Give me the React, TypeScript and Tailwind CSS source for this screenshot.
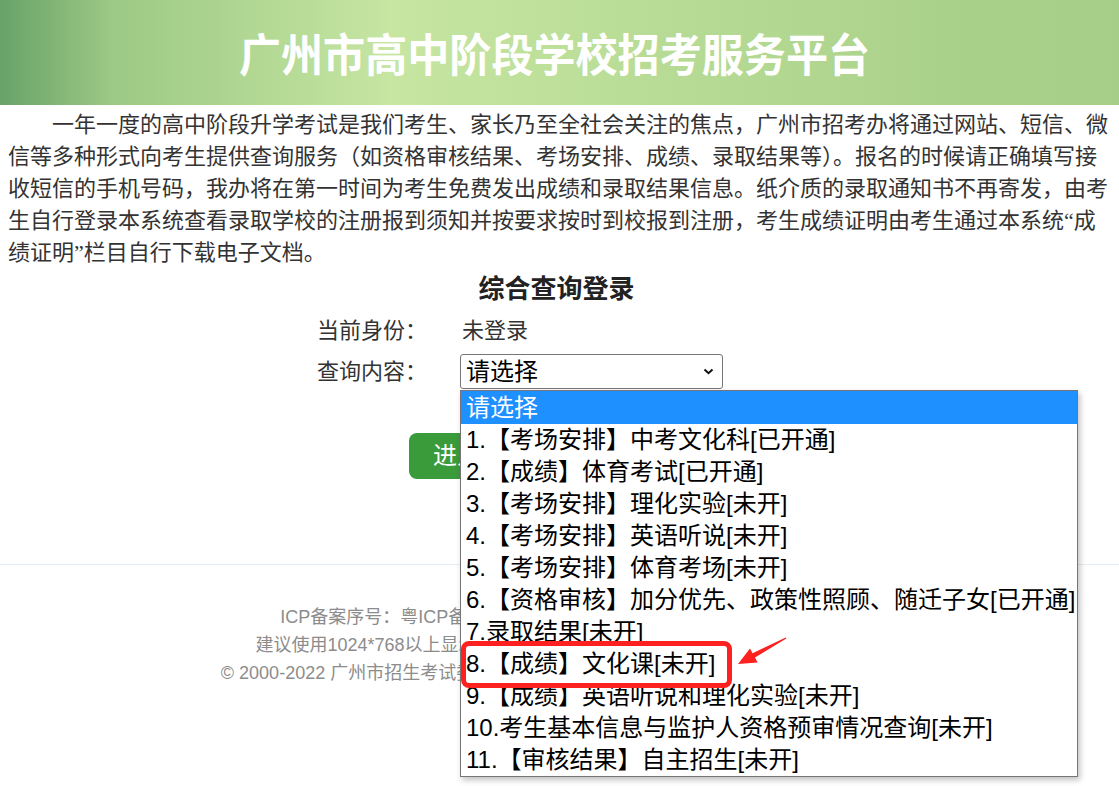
import React from 'react';

const serif = "font-['Liberation_Serif','Noto_Sans_CJK_SC',serif]";
const sans = "font-['Liberation_Sans','Noto_Sans_CJK_SC',sans-serif]";

const options = [
  '1.【考场安排】中考文化科[已开通]',
  '2.【成绩】体育考试[已开通]',
  '3.【考场安排】理化实验[未开]',
  '4.【考场安排】英语听说[未开]',
  '5.【考场安排】体育考场[未开]',
  '6.【资格审核】加分优先、政策性照顾、随迁子女[已开通]',
  '7.录取结果[未开]',
  '8.【成绩】文化课[未开]',
  '9.【成绩】英语听说和理化实验[未开]',
  '10.考生基本信息与监护人资格预审情况查询[未开]',
  '11.【审核结果】自主招生[未开]',
];

function Dropdown() {
  return (
    <div className="absolute left-0 top-[36px] w-[618px] border border-[#767676] bg-white shadow-[2px_3px_6px_rgba(0,0,0,0.25)] z-10">
      <div className={`h-[33px] leading-[33px] pl-[5px] bg-[#1e90ff] text-white text-[24px] ${sans}`}>请选择</div>
      {options.map((o) => (
        <div key={o} className={`h-[32px] leading-[32px] pl-[5px] text-black text-[24px] whitespace-nowrap ${sans}`}>
          {o}
        </div>
      ))}

      {/* annotation */}
      <div className="absolute left-[0px] top-[250px] w-[271px] h-[47px] border-[5px] border-[#ff2020] rounded-[8px]" />
      <svg className="absolute left-[273px] top-[240px]" width="56" height="40" viewBox="0 0 56 40">
        <polygon
          points="4,33 23.6,31.4 21,26.6 52.3,7.5 51.7,6.5 18.6,22.2 16,17.4"
          fill="#ff2020"
        />
      </svg>
    </div>
  );
}

export default function App() {
  return (
    <div className="w-[1119px] min-h-[786px] bg-white overflow-hidden">
      <header className="h-[105px] flex items-center justify-center pr-[10px] bg-[linear-gradient(90deg,#68a268_0%,#9cc985_10%,#c6e6a2_35%,#b8dc96_58%,#aad18a_85%,#a6ce88_100%)]">
        <h1 className="text-white text-[45px] font-bold scale-x-[0.935] font-['Noto_Sans_CJK_SC',sans-serif]">
          广州市高中阶段学校招考服务平台
        </h1>
      </header>

      <p className={`mt-[4px] px-[8px] text-[22px] leading-[32px] text-[#333] indent-[44px] ${serif}`}>
        一年一度的高中阶段升学考试是我们考生、家长乃至全社会关注的焦点，广州市招考办将通过网站、短信、微信等多种形式向考生提供查询服务（如资格审核结果、考场安排、成绩、录取结果等）。报名的时候请正确填写接收短信的手机号码，我办将在第一时间为考生免费发出成绩和录取结果信息。纸介质的录取通知书不再寄发，由考生自行登录本系统查看录取学校的注册报到须知并按要求按时到校报到注册，考生成绩证明由考生通过本系统“成绩证明”栏目自行下载电子文档。
      </p>

      <h2 className={`mt-[5px] text-center pr-[6px] text-[26px] leading-[32px] font-bold text-[#222] ${serif}`}>
        综合查询登录
      </h2>

      <div className={`w-[485px] mx-auto mt-[6px] text-[22px] text-[#333] ${serif}`}>
        <div className="flex items-center h-[36px]">
          <span className="w-[144px]">当前身份：</span>
          <span className="pl-[1px]">未登录</span>
        </div>
        <div className="flex items-center h-[35px] mt-[6px]">
          <span className="w-[143px]">查询内容：</span>
          <div className="relative">
            <div className={`w-[263px] h-[35px] border border-[#767676] rounded-[3px] bg-white flex items-center justify-between pl-[5px] pr-[8px] text-black text-[24px] ${sans}`}>
              <span>请选择</span>
              <svg width="11" height="7" viewBox="0 0 11 7">
                <path d="M1.5 1.5 L5.5 5.2 L9.5 1.5" fill="none" stroke="#111" strokeWidth="2" />
              </svg>
            </div>
            <Dropdown />
          </div>
        </div>
        <button className={`mt-[44px] ml-[92px] h-[46px] px-[24px] rounded-[8px] bg-[#3a9b3a] text-white text-[24px] ${sans}`}>
          进入查询
        </button>
      </div>

      <div className="mt-[85px] h-px bg-[#e4edf4]" />

      <footer className={`pt-[38px] text-center text-[18px] leading-[28px] text-[#8c8c8c] ${sans}`}>
        <div>ICP备案序号：粤ICP备05093866号-1 粤公网安备 44010602000316号</div>
        <div>建议使用1024*768以上显示分辨率，IE9以上版本或谷歌、火狐等浏览器浏览</div>
        <div>© 2000-2022 广州市招生考试委员会办公室 版权所有 技术支持：广州招生考试委员会</div>
      </footer>
    </div>
  );
}
